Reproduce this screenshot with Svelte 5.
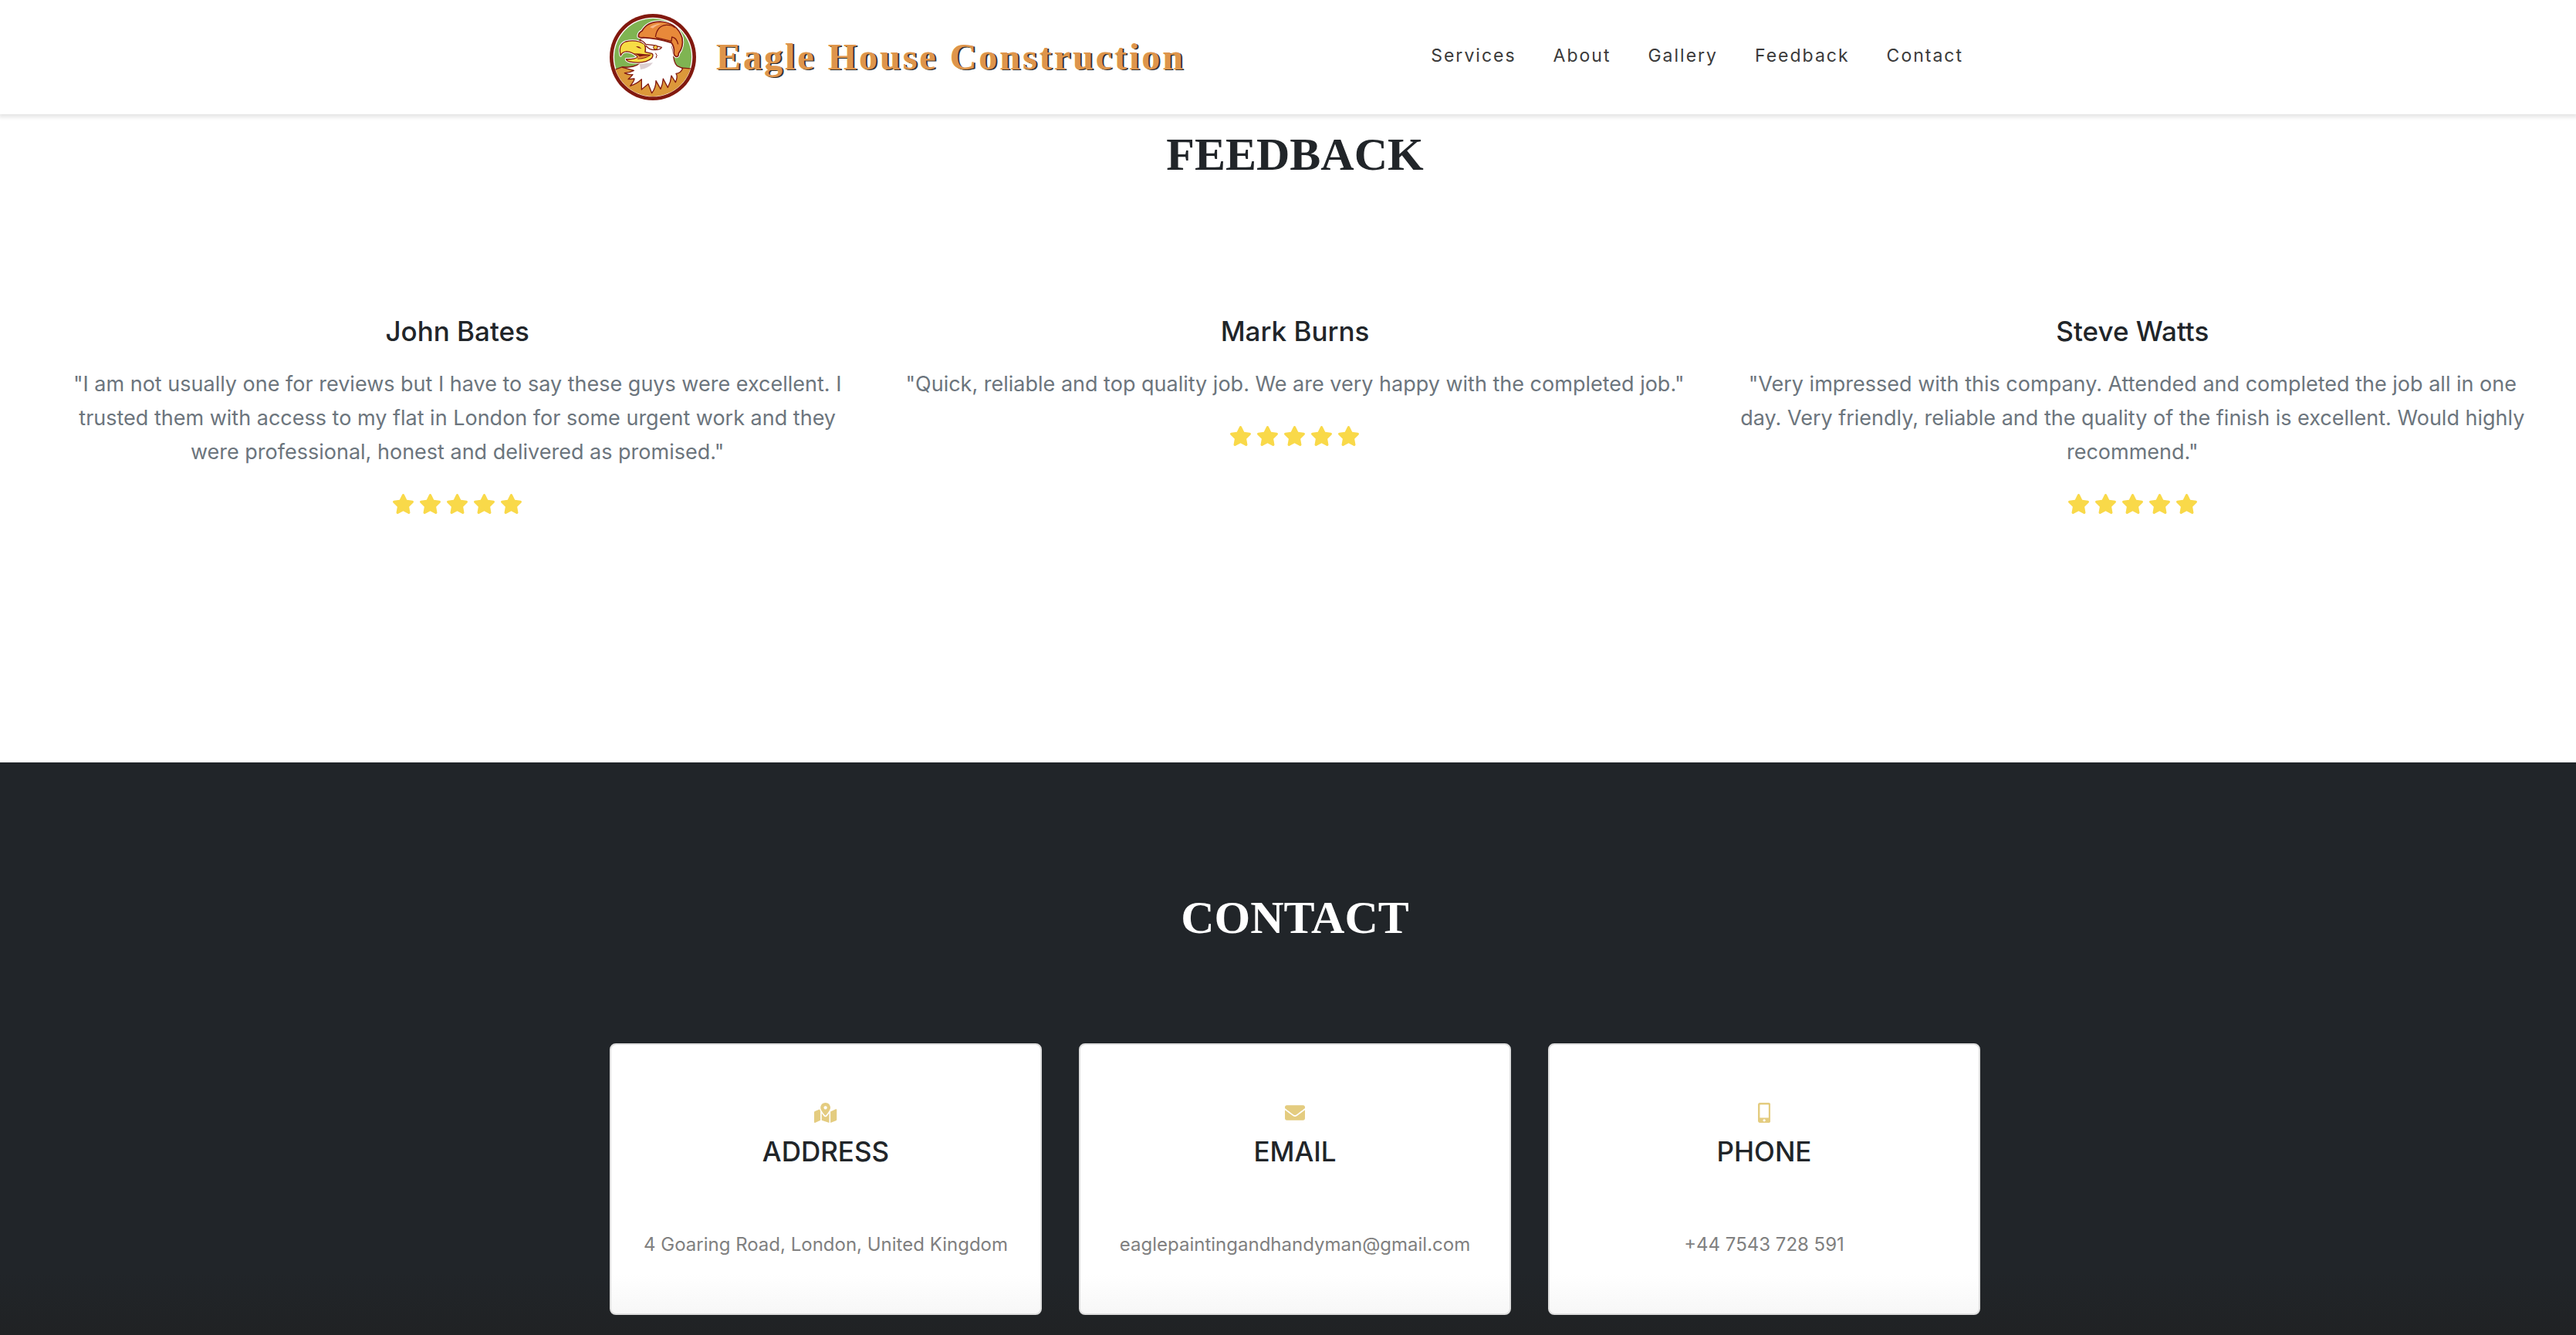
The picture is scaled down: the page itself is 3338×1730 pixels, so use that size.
<script>
  const links = ['Services', 'About', 'Gallery', 'Feedback', 'Contact'];

  const reviews = [
    {
      name: 'John Bates',
      text: '"I am not usually one for reviews but I have to say these guys were excellent. I trusted them with access to my flat in London for some urgent work and they were professional, honest and delivered as promised."',
    },
    {
      name: 'Mark Burns',
      text: '"Quick, reliable and top quality job. We are very happy with the completed job."',
    },
    {
      name: 'Steve Watts',
      text: '"Very impressed with this company. Attended and completed the job all in one day. Very friendly, reliable and the quality of the finish is excellent. Would highly recommend."',
    },
  ];

  const star =
    'M259.3 17.8L194 150.2 47.9 171.5c-26.2 3.8-36.7 36.1-17.7 54.6l105.7 103-25 145.5c-4.5 26.3 23.2 46 46.4 33.7L288 439.6l130.7 68.7c23.2 12.2 50.9-7.4 46.4-33.7l-25-145.5 105.7-103c19-18.5 8.5-50.8-17.7-54.6L382 150.2 316.7 17.8c-11.7-23.6-45.6-23.9-57.4 0z';

  const contacts = [
    {
      title: 'ADDRESS',
      text: '4 Goaring Road, London, United Kingdom',
      box: '0 0 576 512',
      icon: 'M288 0c-69.59 0-126 56.41-126 126 0 56.26 82.35 158.8 113.9 196.02 6.39 7.54 17.82 7.54 24.2 0C331.65 284.8 414 182.26 414 126 414 56.41 357.59 0 288 0zm0 168c-23.2 0-42-18.8-42-42s18.8-42 42-42 42 18.8 42 42-18.8 42-42 42zM20.12 215.95A32.006 32.006 0 0 0 0 245.66v250.32c0 11.32 11.43 19.06 21.94 14.86L160 448V214.92c-8.84-15.98-16.07-31.54-21.25-46.42L20.12 215.95zM288 359.67c-14.07 0-27.38-6.18-36.51-16.96-19.66-23.2-40.57-49.62-59.49-76.72v182l192 64V266c-18.92 27.09-39.82 53.52-59.49 76.72-9.13 10.77-22.44 16.95-36.51 16.95zm266.06-198.51L416 224v288l139.88-55.95A31.996 31.996 0 0 0 576 426.34V176.02c0-11.32-11.43-19.06-21.94-14.86z',
    },
    {
      title: 'EMAIL',
      text: 'eaglepaintingandhandyman@gmail.com',
      box: '0 0 512 512',
      icon: 'M502.3 190.8c3.9-3.1 9.7-.2 9.7 4.7V400c0 26.5-21.5 48-48 48H48c-26.5 0-48-21.5-48-48V195.6c0-5 5.7-7.8 9.7-4.7 22.4 17.4 52.1 39.5 154.1 113.6 21.1 15.4 56.7 47.8 92.2 47.6 35.7.3 72-32.8 92.3-47.6 102-74.1 131.6-96.3 154-113.7zM256 320c23.2.4 56.6-29.2 73.4-41.4 132.7-96.3 142.8-104.7 173.4-128.7 5.8-4.5 9.2-11.5 9.2-18.9v-19c0-26.5-21.5-48-48-48H48c-26.5 0-48 21.5-48 48v19c0 7.4 3.4 14.3 9.2 18.9 30.6 23.9 40.7 32.4 173.4 128.7 16.8 12.2 50.2 41.8 73.4 41.4z',
    },
    {
      title: 'PHONE',
      text: '+44 7543 728 591',
      box: '0 0 320 512',
      icon: 'M272 0H48C21.5 0 0 21.5 0 48v416c0 26.5 21.5 48 48 48h224c26.5 0 48-21.5 48-48V48c0-26.5-21.5-48-48-48zM160 480c-17.7 0-32-14.3-32-32s14.3-32 32-32 32 14.3 32 32-14.3 32-32 32zm112-108c0 6.6-5.4 12-12 12H60c-6.6 0-12-5.4-12-12V60c0-6.6 5.4-12 12-12h200c6.6 0 12 5.4 12 12v312z',
    },
  ];
</script>

<div class="page">
  <header>
    <div class="container bar">
      <a class="brand" href="#top">
        <svg class="logo" viewBox="60 54 336 336" aria-hidden="true">
          <defs>
            <clipPath id="disc"><circle cx="228" cy="222" r="153" /></clipPath>
          </defs>
          <circle cx="228" cy="222" r="168" fill="#82190f" />
          <circle cx="228" cy="222" r="154" fill="#fff" />
          <circle cx="228" cy="222" r="150" fill="#7fb452" />
          <g clip-path="url(#disc)" stroke-linejoin="round">
            <path d="M60 278 L110 260 L180 270 L320 262 L390 268 V400 H60z" fill="#dc983a" stroke="#82190f" stroke-width="4" />
            <path d="M172 160 Q190 142 218 146 L300 165 L308 212 Q308 240 322 256 L344 266 Q336 284 318 286 Q326 296 316 320 L300 294 Q298 318 286 340 L268 306 Q266 330 258 346 L240 314 Q240 340 224 362 L210 326 Q198 336 184 348 L184 308 Q168 324 140 334 Q156 314 156 306 L132 308 Q144 298 150 290 Q132 292 118 284 Q140 282 154 274 L110 262 Q160 262 176 246z" fill="#fff" stroke="#82190f" stroke-width="4" />
            <path d="M176 248 L228 244 Q212 266 180 270z" fill="#dccfd2" />
            <path d="M172 143 Q170 128 186 120 Q206 84 256 84 Q324 88 342 148 Q348 182 328 208 Q328 222 318 220 Q308 216 310 200 Q312 184 300 166 Q240 148 190 146 Q178 148 172 143z" fill="none" stroke="#fff" stroke-width="11" />
            <path d="M172 143 Q170 128 186 120 Q206 84 256 84 Q324 88 342 148 Q348 182 328 208 Q328 222 318 220 Q308 216 310 200 Q312 184 300 166 Q240 148 190 146 Q178 148 172 143z" fill="#e8893a" stroke="#82190f" stroke-width="5" />
            <path d="M238 144 Q244 100 280 97 Q302 96 314 108 M240 146 L300 160 L302 144 Q320 146 326 172" fill="none" stroke="#82190f" stroke-width="4" />
            <path d="M216 106 Q232 92 262 92 Q240 98 228 110z" fill="#f8b98a" />
          </g>
          <path d="M103 216 Q92 174 122 162 Q164 152 196 172 Q202 188 198 202 L224 208 Q232 212 224 226 Q200 248 150 242 Q126 240 124 230 Q152 232 170 222 Q150 202 126 200 Q108 202 103 216z" fill="#fff" stroke="#fff" stroke-width="10" stroke-linejoin="round" />
          <path d="M103 216 Q92 174 122 162 Q164 152 196 172 Q202 188 198 202 L224 208 Q232 212 224 226 Q200 248 150 242 Q126 240 124 230 Q152 232 170 222 Q150 202 126 200 Q108 202 103 216z" fill="#f7dc45" stroke="#82190f" stroke-width="4" stroke-linejoin="round" />
          <path d="M140 206 Q170 208 222 212 Q206 228 168 230 L176 220 Q164 208 140 206z" fill="#82190f" />
          <path d="M168 222 Q190 216 214 216 Q196 226 166 228z" fill="#e8893a" />
          <path d="M162 180 Q176 178 184 190 Q170 188 162 180z" fill="#82190f" />
          <path d="M178 158 Q188 156 200 172 Q232 174 262 184 Q258 194 236 194 Q212 194 202 178" fill="#fff" stroke="#82190f" stroke-width="4" stroke-linecap="round" />
          <circle cx="238" cy="184" r="8" fill="#f0c53d" stroke="#82190f" stroke-width="3" />
          <path d="M238 206 Q248 214 240 226" fill="none" stroke="#82190f" stroke-width="3" />
        </svg>
        <span>Eagle House Construction</span>
      </a>
      <nav>
        {#each links as link}
          <a href={'#' + link.toLowerCase()}>{link}</a>
        {/each}
      </nav>
    </div>
  </header>

  <section class="feedback" id="feedback">
    <h2>FEEDBACK</h2>
    <div class="reviews">
      {#each reviews as review}
        <article>
          <h3>{review.name}</h3>
          <p>{review.text}</p>
          <div class="stars" role="img" aria-label="5 out of 5 stars">
            {#each Array(5) as _}
              <svg viewBox="0 0 576 512"><path d={star} /></svg>
            {/each}
          </div>
        </article>
      {/each}
    </div>
  </section>

  <section class="contact" id="contact">
    <h2>CONTACT</h2>
    <div class="container cards">
      {#each contacts as item}
        <article class="card">
          <svg viewBox={item.box} aria-hidden="true"><path d={item.icon} /></svg>
          <h3>{item.title}</h3>
          <p>{item.text}</p>
        </article>
      {/each}
    </div>
  </section>
</div>

<style>
  :global(body) {
    margin: 0;
    background: #fff;
  }

  .page {
    min-height: 100vh;
    display: flex;
    flex-direction: column;
    color: #212529;
    font-family: Inter, 'Liberation Sans', sans-serif;
  }

  header,
  .contact {
    padding-left: 18px;
  }

  header {
    z-index: 1;
    background: #fff;
    box-shadow: 0 2px 5px 2px rgba(0, 0, 0, 0.1);
  }

  .container {
    max-width: 1776px;
    margin: 0 auto;
  }

  .bar {
    min-height: 148px;
    display: flex;
    align-items: center;
    justify-content: space-between;
  }

  .brand {
    display: flex;
    align-items: center;
    gap: 26px;
    color: #de954b;
    font: bold 48px/56px 'Liberation Serif', serif;
    letter-spacing: 3px;
    text-decoration: none;
    text-shadow: 2px 1px 0 #333;
  }

  .logo {
    width: 112px;
    height: 112px;
  }

  nav {
    display: flex;
    gap: 48px;
    padding: 0 22px 4px 0;
  }

  nav a {
    color: #3a3a3a;
    font-size: 23px;
    line-height: 32px;
    letter-spacing: 2px;
    text-decoration: none;
  }

  h2,
  h3,
  p {
    margin: 0;
    text-align: center;
  }

  h2 {
    font: bold 60px/72px 'Liberation Serif', serif;
  }

  h3 {
    font-size: 35px;
    line-height: 48px;
    font-weight: 500;
  }

  p {
    line-height: 44px;
  }

  .feedback {
    padding: 16px 32px 322px 50px;
  }

  .reviews {
    display: grid;
    grid-template-columns: repeat(3, 1fr);
    margin-top: 169px;
  }

  .reviews article {
    padding: 0 24px;
  }

  .reviews p {
    margin-top: 23px;
    color: #6c757d;
    font-size: 27px;
  }

  .stars {
    display: flex;
    justify-content: center;
    gap: 6px;
    margin-top: 32px;
  }

  .stars svg {
    width: 29px;
    height: 26px;
    fill: #f9d949;
  }

  .contact {
    flex: 1;
    padding-top: 165px;
    padding-bottom: 26px;
    background: linear-gradient(to top, #202224, #212529 80px);
  }

  .contact h2 {
    color: #fff;
  }

  .cards {
    display: grid;
    grid-template-columns: repeat(3, 1fr);
    gap: 48px;
    margin-top: 127px;
  }

  .card {
    display: flex;
    flex-direction: column;
    align-items: center;
    padding: 75px 16px 67px;
    border: 2px solid #dedede;
    border-radius: 8px;
    background: linear-gradient(to top, #f7f7f7, #fff 50px);
  }

  .card svg {
    height: 26px;
    fill: #e4cc80;
  }

  .card h3 {
    margin-top: 13px;
  }

  .card p {
    margin-top: 75px;
    color: #808080;
    font-size: 24px;
  }
</style>
